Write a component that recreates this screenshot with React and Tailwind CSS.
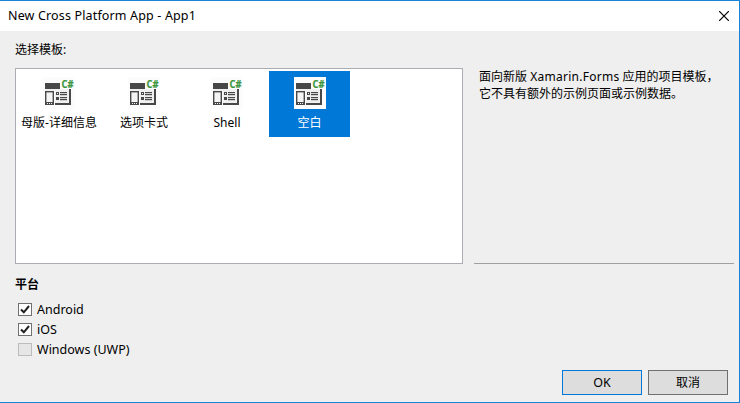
import React from "react";

function TemplateIcon() {
  return (
    <svg width="32" height="32" viewBox="0 0 32 32" className="block shrink-0 bg-[#fcfcfc]" shapeRendering="crispEdges">
      <g fill="#f0f0f0">
        <rect x="2" y="12" width="24" height="2" />
        <rect x="12" y="14" width="14" height="12" />
      </g>
      <g fill="#484848">
        <rect x="2" y="6" width="15" height="6" />
        <rect x="26" y="12" width="2" height="16" />
        <rect x="12" y="26" width="16" height="2" />
        <rect x="2" y="14" width="9" height="14" />
        <path d="M13 15h3v3h-3zM14 16v1h1v-1z" fillRule="evenodd" />
        <rect x="13" y="20" width="3" height="3" />
      </g>
      <g fill="#484848" shapeRendering="auto">
        <rect x="17" y="15" width="7" height="1.200" />
        <rect x="17" y="17" width="7" height="1.200" />
        <rect x="17" y="20" width="7" height="1.200" />
        <rect x="17" y="22" width="7" height="1.200" />
      </g>
      <g fill="#f4f4f4" shapeRendering="auto">
        <rect x="3.400" y="15.400" width="6.200" height="9.600" />
        <rect x="4" y="26" width="1" height="1" />
        <rect x="6" y="26" width="1" height="1" />
        <rect x="8" y="26" width="1" height="1" />
      </g>
      <text x="18.500" y="11" textLength="12" lengthAdjust="spacingAndGlyphs" className="fill-[#3c963c] stroke-[#3c963c] font-['Open_Sans',sans-serif] text-[10px] font-bold [stroke-width:0.2px]">C#</text>
    </svg>
  );
}

function Template({ name, box, selected }) {
  return (
    <div className={`flex h-[66px] shrink-0 flex-col items-center pt-[6px] ${box} ${selected ? "bg-[#0078d7] text-white" : ""}`}>
      <TemplateIcon />
      <span className="mt-[6px] h-4 leading-4 whitespace-nowrap">{name}</span>
    </div>
  );
}

function Check({ name, checked, disabled }) {
  return (
    <div className="flex h-5 items-center">
      <span className={`flex h-[13px] w-[14px] items-center justify-center border ${disabled ? "border-[#bcbcbc] bg-[#e6e6e6]" : "border-[#707070] bg-white"}`}>
        {checked && (
          <svg width="12" height="11" viewBox="0 0 12 11" className="shrink-0">
            <path d="M2 5.500L4.800 8.300L10 2" fill="none" stroke="#212121" strokeWidth="2" />
          </svg>
        )}
      </span>
      <span className="ml-[5px] pt-[2px] whitespace-nowrap">{name}</span>
    </div>
  );
}

export default function App() {
  return (
    <div className="flex h-[403px] w-[740px] flex-col overflow-hidden border-t border-r border-b border-[#1883d7] bg-[#efefef] font-['Noto_Sans','Noto_Sans_CJK_SC',sans-serif] text-[12px] text-black">
      <header className="flex h-[30px] shrink-0 items-center justify-between bg-white pr-[10px] pl-2">
        <h1 className="text-[12.500px] tracking-[0.15px] whitespace-nowrap">New Cross Platform App - App1</h1>
        <svg width="10" height="10" viewBox="0 0 10 10">
          <path d="M0 0L10 10M10 0L0 10" stroke="#000" strokeWidth="1.200" />
        </svg>
      </header>
      <div className="mt-[10px] h-[18px] shrink-0 pl-[15px] leading-[18px]">选择模板:</div>
      <main className="mt-[9px] flex h-[196px] shrink-0 pl-[15px]">
        <div className="flex w-[448px] shrink-0 items-start border border-[#abadb3] bg-white pt-[2px] pl-[2px]">
          <Template name="母版-详细信息" box="w-[82px]" />
          <Template name="选项卡式" box="ml-[3px] w-[82px]" />
          <Template name="Shell" box="ml-px w-[82px]" />
          <Template name="空白" box="ml-px w-[81px]" selected />
        </div>
        <div className="ml-[11px] w-[260px] shrink-0 border-b border-[#a0a0a0] pl-[5px] leading-[17px]">
          <p className="whitespace-nowrap">面向新版 <span className="tracking-[0.27px]">Xamarin.Forms</span> 应用的项目模板，</p>
          <p className="whitespace-nowrap">它不具有额外的示例页面或示例数据。</p>
        </div>
      </main>
      <h2 className="mt-[12px] h-[18px] shrink-0 pl-[15px] leading-[18px] font-bold">平台</h2>
      <div className="mt-[5px] flex shrink-0 flex-col pl-[18px] text-[12.500px]">
        <Check name="Android" checked />
        <Check name="iOS" checked />
        <Check name="Windows (UWP)" disabled />
      </div>
      <footer className="mt-[11px] flex shrink-0 justify-end gap-[6px] pr-[11px]">
        <button className="h-[25px] w-20 border border-[#0078d7] bg-[#dddddd] pt-px text-[12.500px]">OK</button>
        <button className="h-[25px] w-20 border border-[#707070] bg-[#dddddd] pt-px">取消</button>
      </footer>
    </div>
  );
}
